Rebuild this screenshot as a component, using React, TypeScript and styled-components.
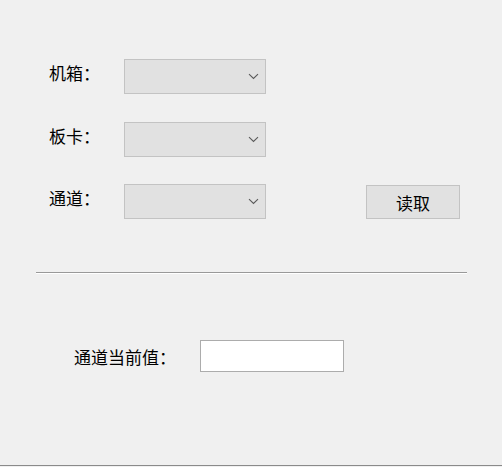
import React from "react";
import styled, { createGlobalStyle } from "styled-components";

const GlobalStyle = createGlobalStyle`
  html, body {
    margin: 0;
    padding: 0;
    background: #f0f0f0;
  }
  body {
    font-family: "Noto Sans CJK SC", "Liberation Sans", sans-serif;
    color: #000000;
  }
`;

const Window = styled.div`
  box-sizing: border-box;
  width: 502px;
  height: 466px;
  background: #f0f0f0;
  border-bottom: 1px solid #8a8a8a;
  box-shadow: 0 1px 0 #a3a3a3;
  overflow: hidden;
`;

const FormGrid = styled.div`
  display: grid;
  grid-template-columns: 75px 142px 100px 94px;
  grid-auto-rows: 35px;
  row-gap: 27.5px;
  align-items: center;
  padding: 59px 0 0 49px;
`;

const Label = styled.span`
  font-size: 17px;
  line-height: 20px;
  margin-top: -7px;
  white-space: nowrap;
`;

const Select = styled.div`
  box-sizing: border-box;
  height: 35px;
  background: #e1e1e1;
  border: 1px solid #c3c3c3;
  display: flex;
  align-items: center;
  justify-content: flex-end;
  padding-right: 6px;
`;

const ReadButton = styled.button<{ $col: number }>`
  grid-column: ${(p) => p.$col};
  box-sizing: border-box;
  height: 34px;
  margin-top: 1px;
  background: #e1e1e1;
  border: 1px solid #c3c3c3;
  font-family: inherit;
  font-size: 17px;
  color: #000000;
  padding: 0;
  cursor: pointer;
`;

const Separator = styled.hr`
  margin: 53px 0 0 36px;
  width: 431px;
  height: 0;
  border: none;
  border-top: 1px solid #999999;
  border-bottom: 1px solid #ffffff;
`;

const ValueRow = styled.div`
  display: grid;
  grid-template-columns: 126px 144px;
  align-items: center;
  padding: 66px 0 0 74px;
`;

const ValueLabel = styled.span`
  font-size: 17px;
  line-height: 20px;
  margin-top: 2px;
`;

const ValueBox = styled.input`
  box-sizing: border-box;
  width: 144px;
  height: 32px;
  background: #ffffff;
  border: 1px solid #acacac;
  outline: none;
  padding: 0 4px;
  font-family: inherit;
  font-size: 15px;
`;

function Chevron() {
  return (
    <svg width="11" height="7" viewBox="0 0 11 7">
      <path d="M1 1.2 L5.5 5.5 L10 1.2" fill="none" stroke="#5a5a5a" strokeWidth="1.1" />
    </svg>
  );
}

const rows = ["机箱：", "板卡：", "通道："];

export default function App() {
  return (
    <>
      <GlobalStyle />
      <Window>
        <FormGrid>
          {rows.map((label, i) => (
            <React.Fragment key={label}>
              <Label>{label}</Label>
              <Select>
                <Chevron />
              </Select>
              {i === 2 && <ReadButton $col={4}>读取</ReadButton>}
              {i !== 2 && <span />}
              {i !== 2 && <span />}
            </React.Fragment>
          ))}
        </FormGrid>
        <Separator />
        <ValueRow>
          <ValueLabel>通道当前值：</ValueLabel>
          <ValueBox readOnly />
        </ValueRow>
      </Window>
    </>
  );
}
